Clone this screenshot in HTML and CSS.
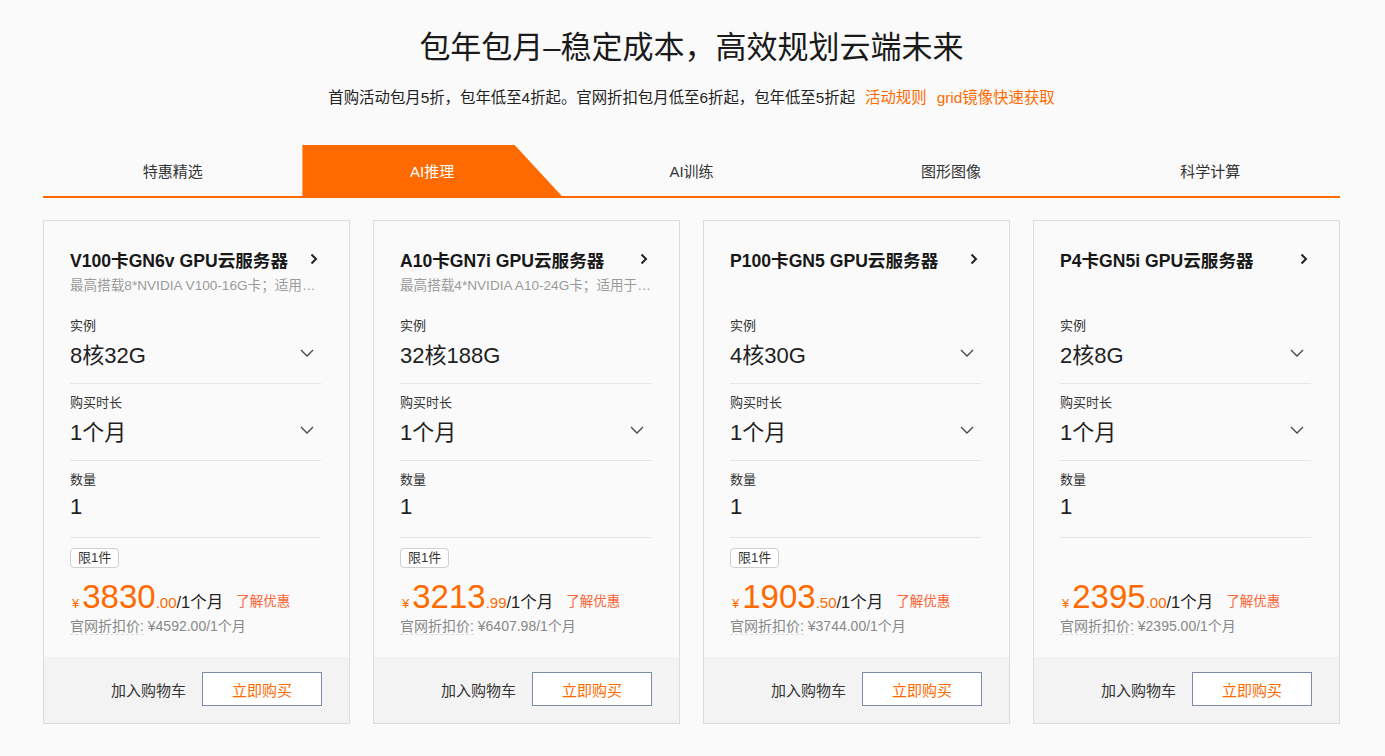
FILE: index.html
```html
<!DOCTYPE html>
<html lang="zh-CN">
<head>
<meta charset="utf-8">
<title>包年包月</title>
<link rel="stylesheet" href="styles.css">
</head>
<body>
<div class="page">
  <header class="hero">
    <h1 class="hero-title">包年包月–稳定成本，高效规划云端未来</h1>
    <p class="hero-sub">首购活动包月5折，包年低至4折起。官网折扣包月低至6折起，包年低至5折起<a class="hero-link">活动规则</a><a class="hero-link">grid镜像快速获取</a></p>
  </header>

  <nav class="tabs">
    <div class="tab">特惠精选</div>
    <div class="tab tab-active">AI推理</div>
    <div class="tab">AI训练</div>
    <div class="tab">图形图像</div>
    <div class="tab">科学计算</div>
  </nav>

  <section class="cards">
    <div class="card">
      <div class="card-body">
        <div class="card-title"><span>V100卡GN6v GPU云服务器</span><svg class="chev-right" viewBox="0 0 8 12"><path d="M1.5 1.5 L6 6 L1.5 10.5"/></svg></div>
        <div class="card-desc">最高搭载8*NVIDIA V100-16G卡；适用于深度学习训练与推理场景</div>
        <div class="field"><div class="field-label">实例</div><div class="field-value"><span>8核32G</span><svg class="chev-down" viewBox="0 0 14 8"><path d="M1 1 L7 7 L13 1"/></svg></div></div>
        <div class="field"><div class="field-label">购买时长</div><div class="field-value"><span>1个月</span><svg class="chev-down" viewBox="0 0 14 8"><path d="M1 1 L7 7 L13 1"/></svg></div></div>
        <div class="field"><div class="field-label">数量</div><div class="field-value"><span>1</span></div></div>
        <div class="limit-row"><span class="badge">限1件</span></div>
        <div class="price-row"><span class="yen">¥</span><span class="price-int">3830</span><span class="price-dec">.00</span><span class="price-unit">/1个月</span><a class="price-link">了解优惠</a></div>
        <div class="old-price"><span class="dashed">官网折扣价:</span> ¥4592.00/1个月</div>
      </div>
      <div class="card-foot"><span class="cart">加入购物车</span><button class="buy">立即购买</button></div>
    </div>

    <div class="card">
      <div class="card-body">
        <div class="card-title"><span>A10卡GN7i GPU云服务器</span><svg class="chev-right" viewBox="0 0 8 12"><path d="M1.5 1.5 L6 6 L1.5 10.5"/></svg></div>
        <div class="card-desc">最高搭载4*NVIDIA A10-24G卡；适用于AI推理与图形渲染场景</div>
        <div class="field"><div class="field-label">实例</div><div class="field-value"><span>32核188G</span></div></div>
        <div class="field"><div class="field-label">购买时长</div><div class="field-value"><span>1个月</span><svg class="chev-down" viewBox="0 0 14 8"><path d="M1 1 L7 7 L13 1"/></svg></div></div>
        <div class="field"><div class="field-label">数量</div><div class="field-value"><span>1</span></div></div>
        <div class="limit-row"><span class="badge">限1件</span></div>
        <div class="price-row"><span class="yen">¥</span><span class="price-int">3213</span><span class="price-dec">.99</span><span class="price-unit">/1个月</span><a class="price-link">了解优惠</a></div>
        <div class="old-price"><span class="dashed">官网折扣价:</span> ¥6407.98/1个月</div>
      </div>
      <div class="card-foot"><span class="cart">加入购物车</span><button class="buy">立即购买</button></div>
    </div>

    <div class="card">
      <div class="card-body">
        <div class="card-title"><span>P100卡GN5 GPU云服务器</span><svg class="chev-right" viewBox="0 0 8 12"><path d="M1.5 1.5 L6 6 L1.5 10.5"/></svg></div>
        <div class="card-desc"></div>
        <div class="field"><div class="field-label">实例</div><div class="field-value"><span>4核30G</span><svg class="chev-down" viewBox="0 0 14 8"><path d="M1 1 L7 7 L13 1"/></svg></div></div>
        <div class="field"><div class="field-label">购买时长</div><div class="field-value"><span>1个月</span><svg class="chev-down" viewBox="0 0 14 8"><path d="M1 1 L7 7 L13 1"/></svg></div></div>
        <div class="field"><div class="field-label">数量</div><div class="field-value"><span>1</span></div></div>
        <div class="limit-row"><span class="badge">限1件</span></div>
        <div class="price-row"><span class="yen">¥</span><span class="price-int">1903</span><span class="price-dec">.50</span><span class="price-unit">/1个月</span><a class="price-link">了解优惠</a></div>
        <div class="old-price"><span class="dashed">官网折扣价:</span> ¥3744.00/1个月</div>
      </div>
      <div class="card-foot"><span class="cart">加入购物车</span><button class="buy">立即购买</button></div>
    </div>

    <div class="card">
      <div class="card-body">
        <div class="card-title"><span>P4卡GN5i GPU云服务器</span><svg class="chev-right" viewBox="0 0 8 12"><path d="M1.5 1.5 L6 6 L1.5 10.5"/></svg></div>
        <div class="card-desc"></div>
        <div class="field"><div class="field-label">实例</div><div class="field-value"><span>2核8G</span><svg class="chev-down" viewBox="0 0 14 8"><path d="M1 1 L7 7 L13 1"/></svg></div></div>
        <div class="field"><div class="field-label">购买时长</div><div class="field-value"><span>1个月</span><svg class="chev-down" viewBox="0 0 14 8"><path d="M1 1 L7 7 L13 1"/></svg></div></div>
        <div class="field"><div class="field-label">数量</div><div class="field-value"><span>1</span></div></div>
        <div class="limit-row"></div>
        <div class="price-row"><span class="yen">¥</span><span class="price-int">2395</span><span class="price-dec">.00</span><span class="price-unit">/1个月</span><a class="price-link">了解优惠</a></div>
        <div class="old-price"><span class="dashed">官网折扣价:</span> ¥2395.00/1个月</div>
      </div>
      <div class="card-foot"><span class="cart">加入购物车</span><button class="buy">立即购买</button></div>
    </div>
  </section>
</div>
</body>
</html>
```

FILE: styles.css
```css
* { box-sizing: border-box; }

html, body {
  margin: 0;
  padding: 0;
  background: #fafafa;
}

body {
  font-family: "Liberation Sans", "Noto Sans CJK SC", sans-serif;
  color: #333;
}

.page {
  width: 1297px;
  margin: 0 0 0 43px;
}

.hero {
  text-align: center;
  padding-top: 28px;
}

.hero-title {
  margin: 0;
  font-size: 31px;
  line-height: 40px;
  font-weight: normal;
  color: #1a1a1a;
}

.hero-sub {
  margin: 19px 0 0;
  font-size: 15.4px;
  line-height: 22px;
  color: #222;
}

.hero-link {
  color: #ff6a00;
  margin-left: 10px;
  text-decoration: none;
}

.tabs {
  display: flex;
  margin-top: 36px;
  border-bottom: 2px solid #ff6a00;
  height: 53px;
}

.tab {
  flex: 1;
  height: 51px;
  display: flex;
  align-items: center;
  justify-content: center;
  padding-bottom: 1px;
  font-size: 15px;
  color: #333;
}

.tab-active {
  background: #ff6a00;
  color: #fff;
  clip-path: polygon(0 0, 81.8% 0, 100% 100%, 0 100%);
}

.cards {
  display: flex;
  gap: 23px;
  margin-top: 22px;
}

.card {
  width: 307px;
  height: 504px;
  border: 1px solid #dcdcdc;
  background: #fafafa;
  display: flex;
  flex-direction: column;
}

.card-body {
  flex: 1;
  padding: 27px 28px 0 26px;
}

.card-title {
  display: flex;
  align-items: center;
  justify-content: space-between;
  height: 22px;
  font-size: 17.6px;
  font-weight: 600;
  color: #181818;
  padding-right: 3px;
}

.chev-right {
  width: 8px;
  height: 12px;
  fill: none;
  stroke: #222;
  stroke-width: 2;
}

.card-desc {
  margin-top: 7px;
  margin-bottom: 12px;
  height: 18px;
  font-size: 13.6px;
  line-height: 18px;
  color: #9a9a9a;
  white-space: nowrap;
  overflow: hidden;
  text-overflow: ellipsis;
}

.field {
  padding: 10px 0 15px;
  border-bottom: 1px solid #e6e6e6;
}

.field-label {
  font-size: 13px;
  line-height: 18px;
  color: #333;
}

.field-value {
  margin-top: 3px;
  height: 30px;
  display: flex;
  align-items: center;
  justify-content: space-between;
  padding-right: 7px;
  font-size: 22px;
  color: #1f1f1f;
}

.chev-down {
  width: 14px;
  height: 8px;
  fill: none;
  stroke: #444;
  stroke-width: 1.3;
}

.limit-row {
  margin-top: 10px;
  height: 20px;
}

.badge {
  display: inline-block;
  height: 20px;
  padding: 0 7px;
  border: 1px solid #cfcfcf;
  border-radius: 4px;
  font-size: 13px;
  line-height: 18px;
  color: #333;
  background: #fff;
}

.price-row {
  margin-top: 9px;
  height: 40px;
  line-height: 40px;
  white-space: nowrap;
  color: #ff6a00;
}

.yen {
  font-size: 13px;
  margin: 0 3px 0 2px;
}

.price-int {
  font-size: 33px;
}

.price-dec {
  font-size: 15px;
}

.price-unit {
  font-size: 16.5px;
  color: #222;
}

.price-link {
  font-size: 13.5px;
  margin-left: 13px;
  color: #fa6437;
  position: relative;
  top: -2px;
}

.old-price {
  margin-top: 1px;
  font-size: 14px;
  line-height: 16px;
  color: #888;
  white-space: nowrap;
}

.dashed {
  border-bottom: 1px dashed #ddd;
}

.card-foot {
  height: 66px;
  background: #f3f3f3;
  display: flex;
  align-items: center;
  justify-content: flex-end;
  padding-right: 27px;
  padding-bottom: 2px;
  gap: 16px;
}

.cart {
  font-size: 15px;
  color: #333;
}

.buy {
  width: 120px;
  height: 34px;
  border: 1px solid #7d8cab;
  background: #fff;
  color: #ff6a00;
  font-family: inherit;
  font-size: 15px;
  padding: 0;
}
```
